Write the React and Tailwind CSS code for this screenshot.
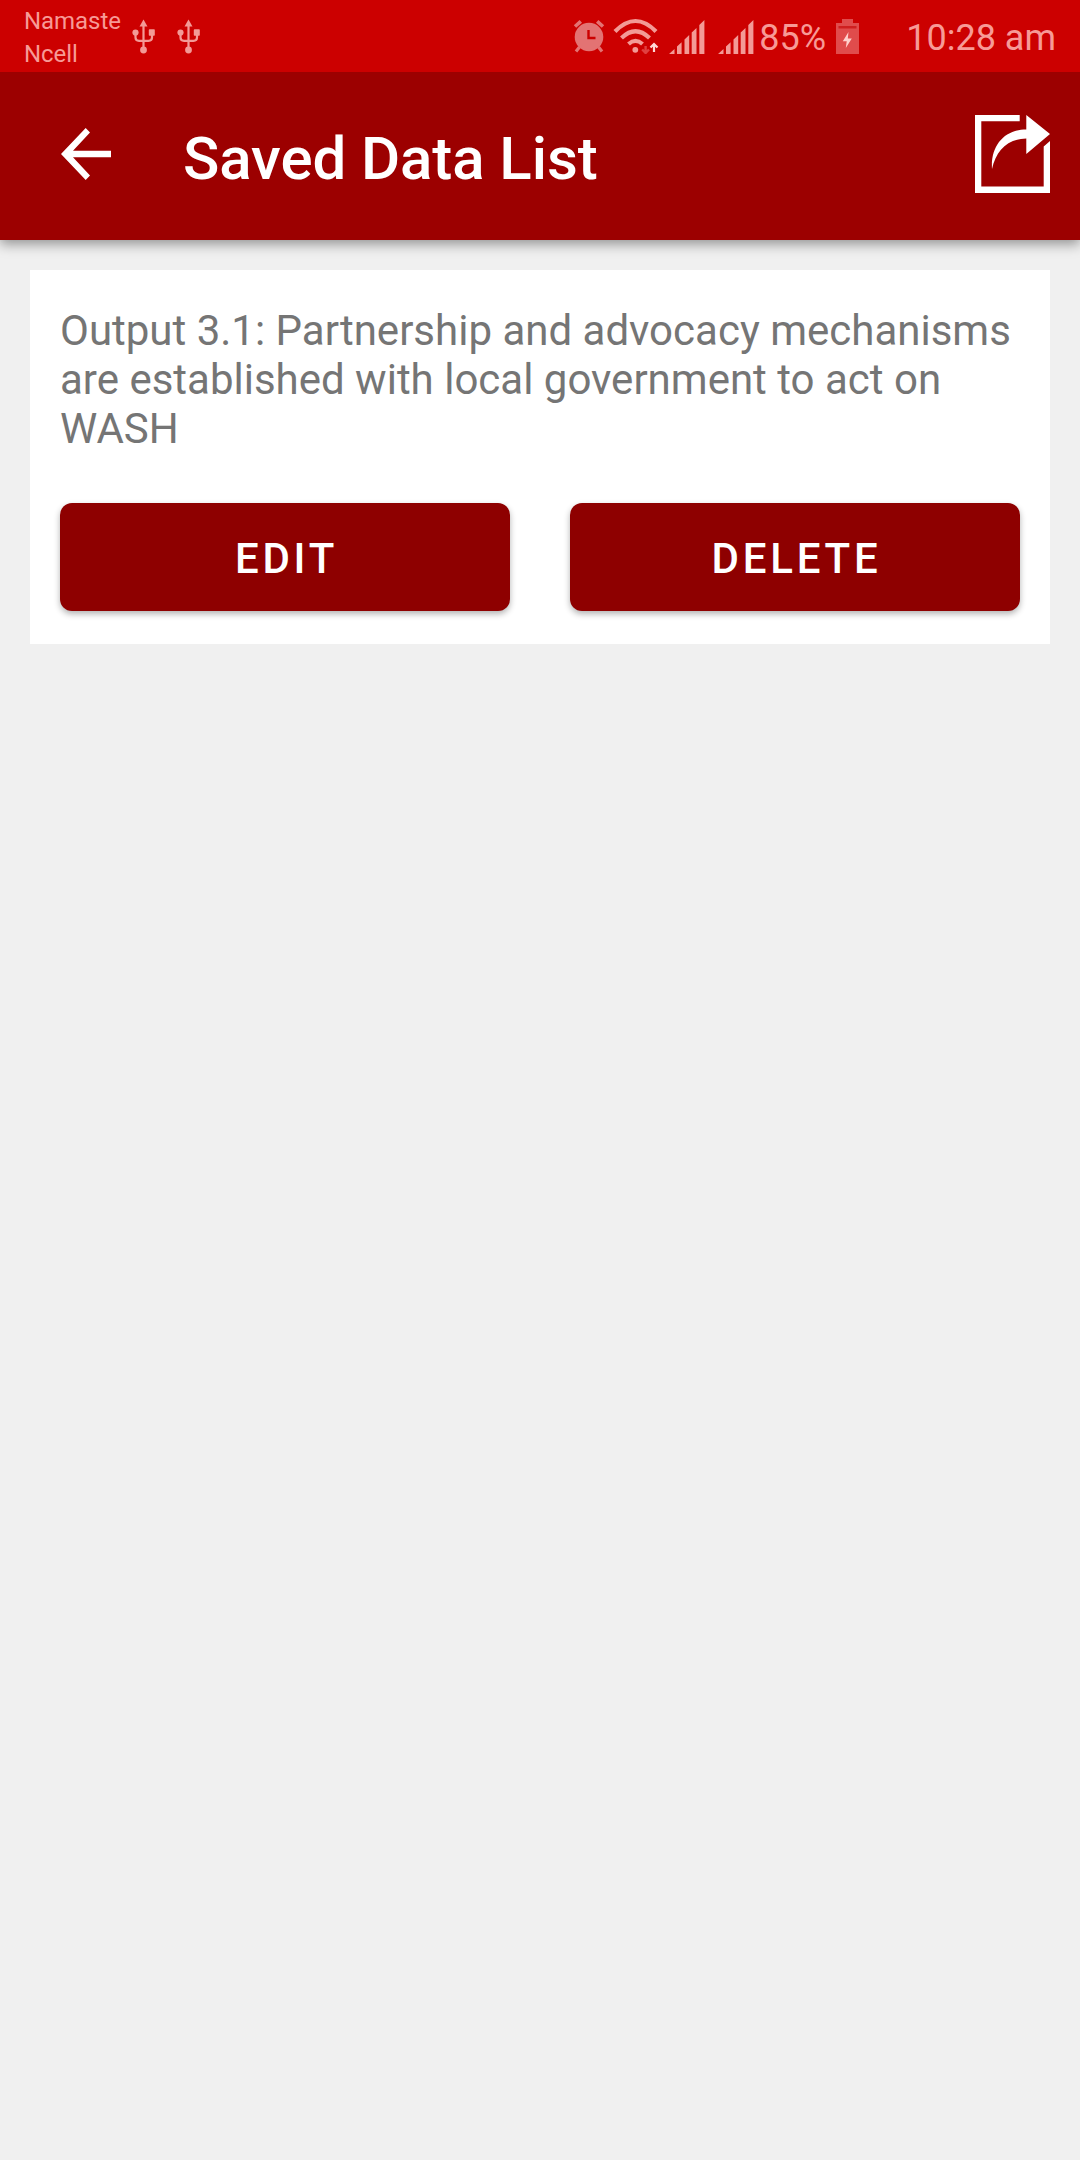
function Usb({ className }) {
  return (
    <svg className={className} width="24" height="35" viewBox="0 0 24 35">
      <g fill="#f39a96">
        <path d="M11.5 0.5L15.5 7.5H7.5Z" />
        <circle cx="3.5" cy="13.5" r="3.1" />
        <rect x="16.8" y="10.3" width="6" height="6.4" rx="0.8" />
        <circle cx="11.5" cy="31" r="3.4" />
      </g>
      <path d="M11.5 6V30M3.5 14V18.5Q3.5 21.8 7 21.8H16.5Q20 21.8 20 18.5V14" fill="none" stroke="#f39a96" strokeWidth="2.2" />
    </svg>
  );
}

function Alarm() {
  return (
    <svg className="ml-auto shrink-0" width="32" height="34" viewBox="0 0 32 34">
      <circle cx="16" cy="18" r="14.3" fill="#e37373" />
      <path d="M2 7.5L7.8 2.3M30 7.5L24.2 2.3" stroke="#e37373" strokeWidth="3.6" />
      <path d="M6.5 28L3 32.5M25.5 28L29 32.5" stroke="#e37373" strokeWidth="3.2" />
      <path d="M15.5 11V19H22.5" fill="none" stroke="#cc0000" strokeWidth="2.4" />
    </svg>
  );
}

function Wifi() {
  return (
    <svg className="ml-2 shrink-0" width="46" height="36" viewBox="0 0 46 36">
      <g fill="none" stroke="#f39a96" strokeWidth="4.2">
        <path d="M2 13.5Q22.500 -7.500 43 13.5" />
        <path d="M8.500 20Q22.500 6.500 36.500 20" />
        <path d="M15.500 26Q22.500 19.800 29.500 26" />
      </g>
      <circle cx="22.300" cy="31.800" r="2.900" fill="#f39a96" />
      <path d="M32.600 28V35M29.200 31.500L32.600 35L36 31.500" fill="none" stroke="#e04040" strokeWidth="2.400" />
      <path d="M41 34V26.500M37.500 29.500L41 26L44.500 29.500" fill="none" stroke="#ffd9d6" strokeWidth="2.200" />
    </svg>
  );
}

function Signal({ className }) {
  return (
    <svg className={className} width="36" height="34" viewBox="0 0 36 34" fill="#f39a96">
      <path d="M0 34L5.500 29V34ZM8 34V26.500L12.600 22.200V34ZM15.500 34V19.400L20.200 15V34ZM22.700 34V12.500L27.500 8V34ZM30.300 34V5L35.400 0V34Z" />
    </svg>
  );
}

function Battery() {
  return (
    <svg className="shrink-0" width="23" height="35" viewBox="0 0 23 35">
      <path d="M6 0H17V4H23V35H0V4H6Z" fill="#e04c4c" />
      <rect x="2.500" y="7" width="18" height="2.500" fill="#cf1f1f" />
      <path d="M12.500 13L6.800 22.300H10.700L9.800 29L15.800 19.400H11.800Z" fill="#ffd0cc" />
    </svg>
  );
}

function StatusBar() {
  return (
    <div className="relative z-10 flex h-[72px] items-center bg-[#cc0000] pr-6 pl-6 text-[#f79a96]">
      <div className="w-[108px] pt-1 text-[24px] leading-[33px] tracking-[-0.05px]">
        <div>Namaste</div>
        <div>Ncell</div>
      </div>
      <Usb className="mt-px shrink-0" />
      <Usb className="mt-px ml-[21px] shrink-0" />
      <Alarm />
      <Wifi />
      <Signal className="mt-[2px] ml-[10px] shrink-0" />
      <Signal className="mt-[2px] ml-[13px] shrink-0" />
      <div className="ml-[5px] w-[77px] pt-[3px] text-[36px] leading-[42px] whitespace-nowrap">85%</div>
      <Battery />
      <div className="ml-[47px] pt-[3px] text-[36px] leading-[42px] whitespace-nowrap">10:28 am</div>
    </div>
  );
}

function AppBar() {
  return (
    <header className="relative flex h-[168px] items-center bg-[#9c0000] pr-[30px] pl-[61px] text-white shadow-[0_4px_12px_rgba(0,0,0,0.4)]">
      <button className="-mt-1 block" aria-label="Back">
        <svg width="50" height="52" viewBox="0 0 50 52" fill="#fff">
          <path d="M50 22.700H12L29 4.600L24.700 0L0 26L24.700 52L29 47.400L12 29.300H50Z" />
        </svg>
      </button>
      <h1 className="ml-[72px] pt-1.5 text-[60px] leading-[70px] font-medium tracking-[-0.08px]">Saved Data List</h1>
      <button className="-mt-1 ml-auto block" aria-label="Share">
        <svg width="75" height="78" viewBox="0 0 75 78" fill="#fff">
          <path d="M44.700 0H0V78H75V26L68.700 31.500V71.500H6.300V6.300H44.700Z" />
          <path d="M51.300 0L75 19L51.300 39V23.500C32 24 21 36 17 54C15.500 30 30 14.500 51.300 14.500Z" />
        </svg>
      </button>
    </header>
  );
}

function ActionButton({ children }) {
  return (
    <button className="h-[108px] flex-1 rounded-xl bg-[#8e0000] pt-0.5 pl-[3px] text-[42px] leading-[49px] font-medium tracking-[3.75px] text-white shadow-[0_3px_6px_rgba(0,0,0,0.3)]">
      {children}
    </button>
  );
}

export default function App() {
  return (
    <div className="h-[2160px] w-[1080px] overflow-hidden bg-[#f0f0f0] font-['Roboto',sans-serif]">
      <StatusBar />
      <AppBar />
      <main className="p-[30px]">
        <section className="h-[374px] bg-white px-[30px] pt-9">
          <p className="h-[197px] text-[42px] leading-[49px] text-[#757575]">
            Output 3.1: Partnership and advocacy mechanisms are established with local government to act on WASH
          </p>
          <div className="flex gap-[60px]">
            <ActionButton>EDIT</ActionButton>
            <ActionButton>DELETE</ActionButton>
          </div>
        </section>
      </main>
    </div>
  );
}
